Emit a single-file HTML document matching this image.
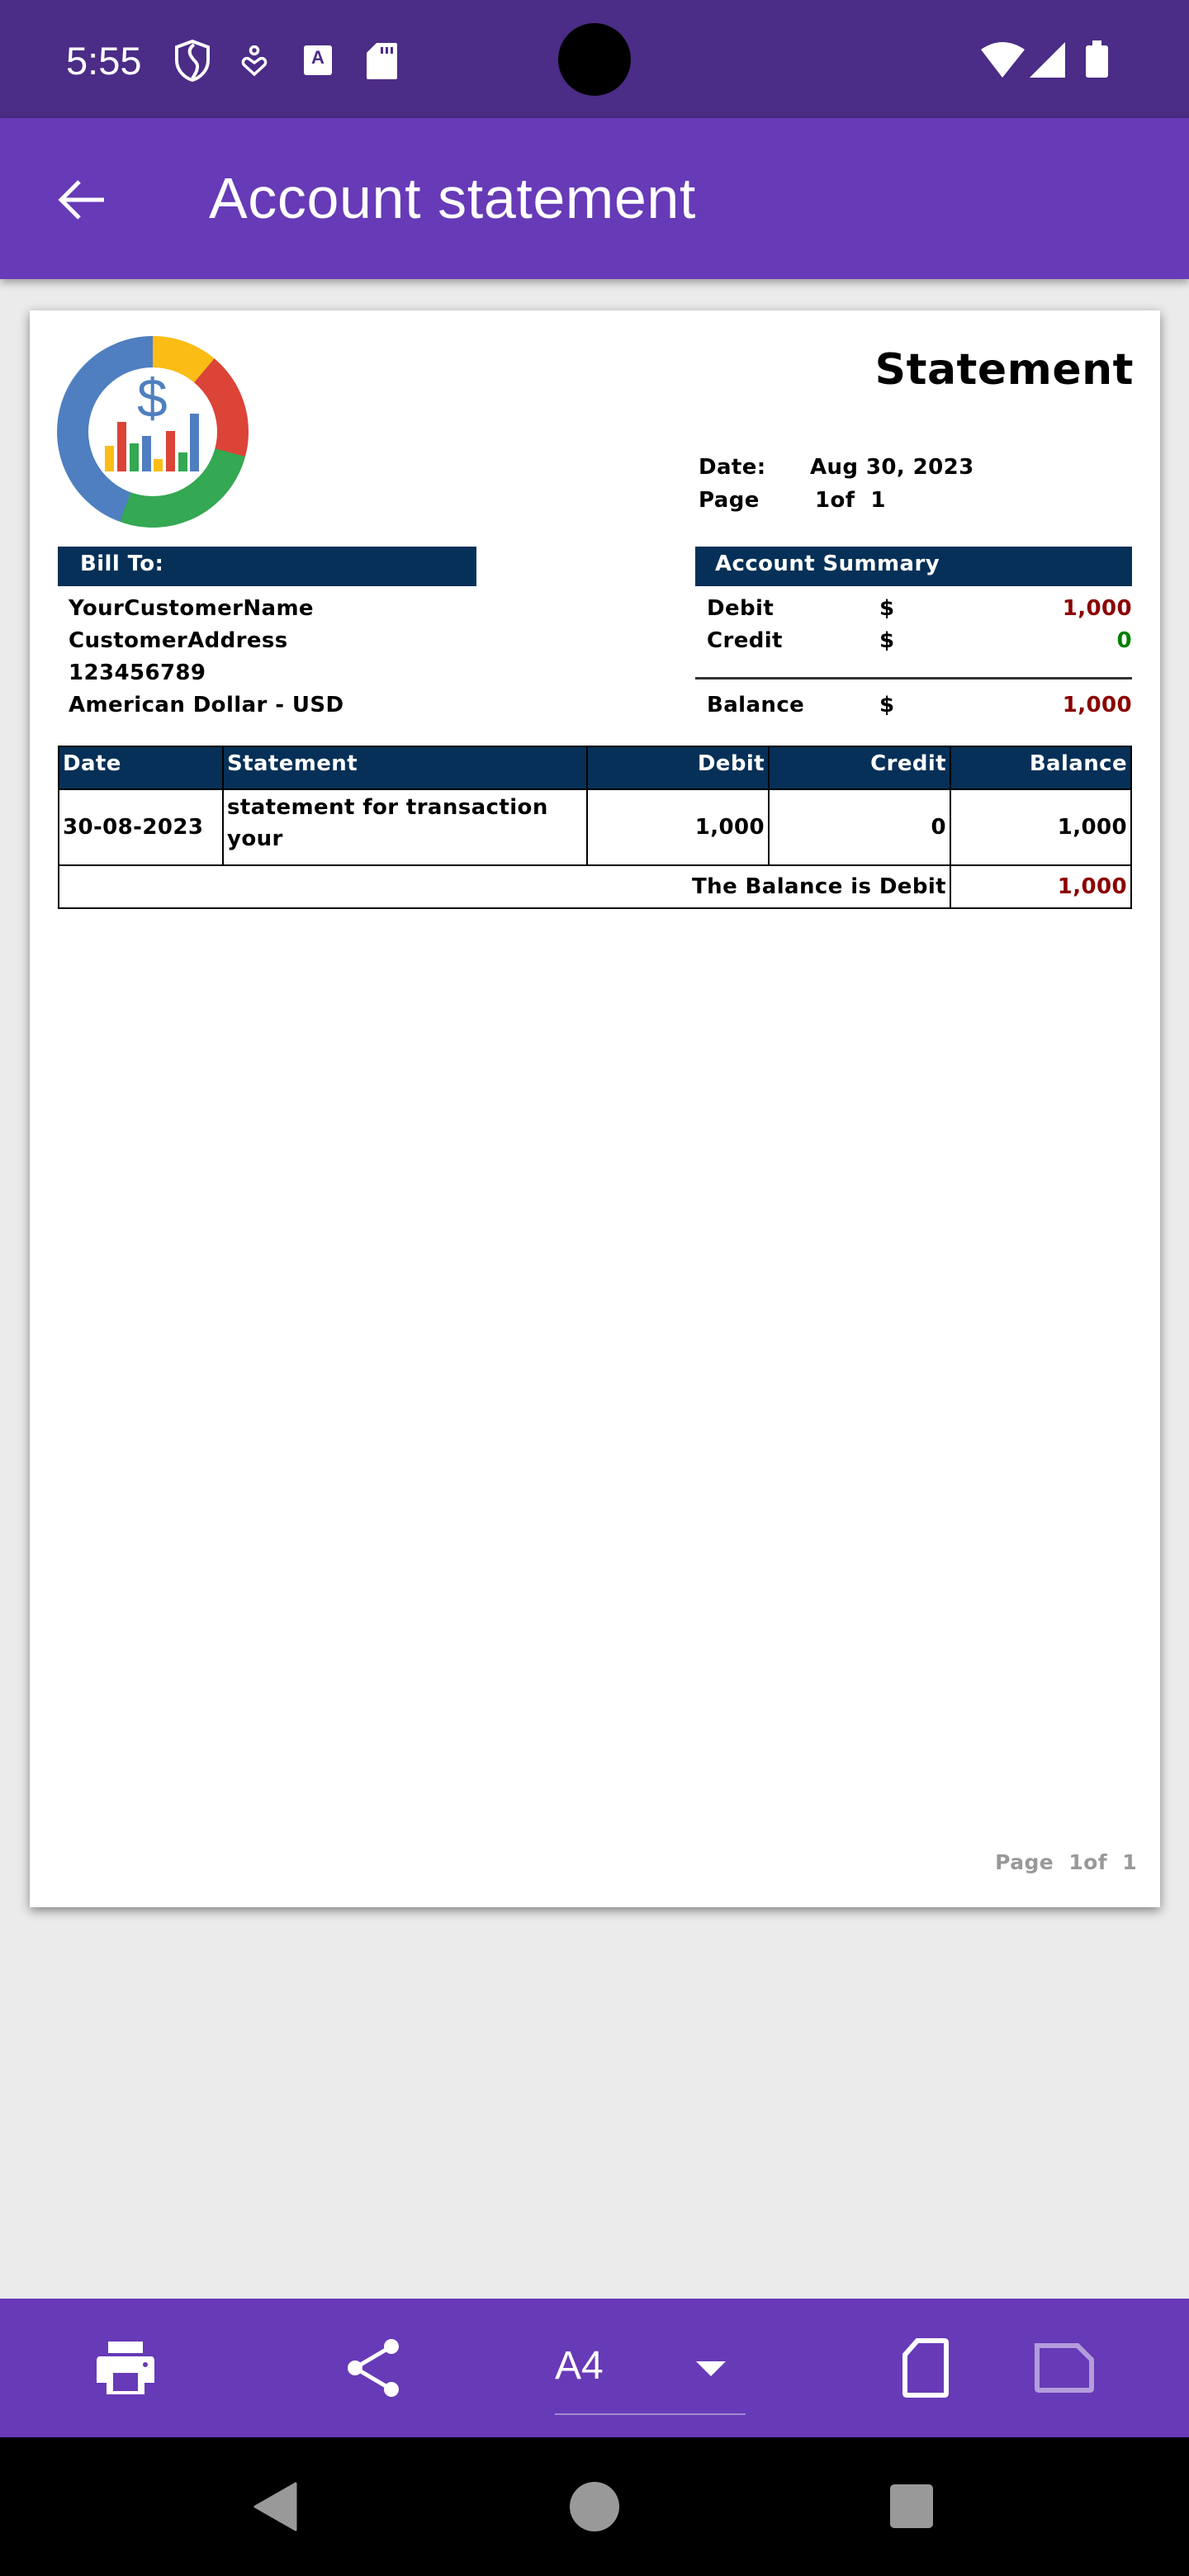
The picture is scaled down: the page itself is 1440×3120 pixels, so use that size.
<!DOCTYPE html>
<html><head><meta charset="utf-8"><style>
*{margin:0;padding:0;box-sizing:border-box}
body{width:1440px;height:3120px;background:#ebebeb;position:relative;overflow:hidden;font-family:"Liberation Sans",Arial,sans-serif}
.abs{position:absolute}
.doc{font-family:"DejaVu Sans","Liberation Sans",sans-serif;font-weight:bold;color:#000;font-size:26px;letter-spacing:0.4px;white-space:nowrap}
table{border-collapse:collapse;position:absolute;left:70px;top:903px;width:1301px;font-family:"DejaVu Sans","Liberation Sans",sans-serif}
td{border:2px solid #000;font-weight:bold;font-size:26px;letter-spacing:0.4px;padding:0 4px;white-space:nowrap}
th{background:#063057;color:#fff;border:2px solid #000;font-size:26px;letter-spacing:0.4px;text-align:left;padding:0 4px;height:52px;vertical-align:top;padding-top:5px}
</style></head><body>
<div class="abs" style="left:0;top:0;width:1440px;height:143px;background:#4b2c86"></div>
<div class="abs" style="left:80px;top:46px;color:#fff;font-size:47px;line-height:56px">5:55</div>
<svg class="abs" style="left:205px;top:45px" width="56" height="56" viewBox="0 0 56 56"><path d="M28 5 L47 12 V28 C47 40 38 49 28 52 C18 49 9 40 9 28 V12 Z" fill="none" stroke="#fff" stroke-width="4"/><path d="M30 9 C20 16 26 24 32 30 C37 36 32 44 28 50" fill="none" stroke="#fff" stroke-width="4"/></svg>
<svg class="abs" style="left:290px;top:55px" width="36" height="40" viewBox="0 0 36 40"><circle cx="18" cy="6" r="4.5" fill="none" stroke="#fff" stroke-width="3.5"/><path d="M18 35 L6 24 C2 20 6 14 11 16 L18 21 L25 16 C30 14 34 20 30 24 Z" fill="none" stroke="#fff" stroke-width="3.5"/></svg>
<div class="abs" style="left:368px;top:55px;width:34px;height:36px;background:#fff;border-radius:3px;color:#4b2c86;font-weight:bold;font-size:22px;text-align:center;line-height:30px">A</div>
<svg class="abs" style="left:444px;top:52px" width="37" height="44" viewBox="0 0 37 44"><path d="M12 0 H35 Q37 0 37 2 V42 Q37 44 35 44 H2 Q0 44 0 42 V12 Z" fill="#fff"/><rect x="17" y="5" width="3" height="8" fill="#4b2c86"/><rect x="23" y="5" width="3" height="8" fill="#4b2c86"/><rect x="29" y="5" width="3" height="8" fill="#4b2c86"/></svg>
<div class="abs" style="left:676px;top:28px;width:88px;height:88px;border-radius:50%;background:#000"></div>
<svg class="abs" style="left:1186px;top:48px" width="160" height="48" viewBox="0 0 160 48"><path d="M2 12 Q28 -6 55 12 L28 46 Z" fill="#fff"/><path d="M104 3 V46 H61 Z" fill="#fff"/><rect x="129" y="7" width="27" height="39" rx="3" fill="#fff"/><rect x="137" y="1" width="11" height="8" fill="#fff"/></svg>
<div class="abs" style="left:0;top:143px;width:1440px;height:195px;background:#673ab7;box-shadow:0 4px 10px rgba(0,0,0,.35)"></div>
<svg class="abs" style="left:68px;top:214px" width="60" height="56" viewBox="0 0 60 56"><path d="M58 28 H8 M28 6 L6 28 L28 50" fill="none" stroke="#fff" stroke-width="5"/></svg>
<div class="abs" style="left:253px;top:200px;color:#fff;font-size:70px;letter-spacing:0.6px;line-height:80px">Account statement</div>
<div class="abs" style="left:36px;top:376px;width:1369px;height:1934px;background:#fff;box-shadow:0 4px 12px rgba(0,0,0,.45)"></div>
<div class="abs" style="left:69px;top:407px;width:232px;height:232px;border-radius:50%;background:conic-gradient(#fbbc15 0deg 40deg,#db4437 40deg 105deg,#34a853 105deg 200deg,#4f7fc0 200deg 360deg)"></div>
<div class="abs" style="left:107px;top:445px;width:156px;height:156px;border-radius:50%;background:#fff"></div>
<div class="abs" style="left:166px;top:444px;color:#4f7fc0;font-size:66px;line-height:76px">$</div>
<div class="abs" style="left:127px;top:540px;width:11px;height:31px;background:#fbbc15"></div>
<div class="abs" style="left:142px;top:511px;width:11px;height:60px;background:#db4437"></div>
<div class="abs" style="left:157px;top:537px;width:11px;height:34px;background:#34a853"></div>
<div class="abs" style="left:172px;top:528px;width:11px;height:43px;background:#4f7fc0"></div>
<div class="abs" style="left:186px;top:556px;width:11px;height:15px;background:#fbbc15"></div>
<div class="abs" style="left:201px;top:522px;width:11px;height:49px;background:#db4437"></div>
<div class="abs" style="left:216px;top:548px;width:11px;height:23px;background:#34a853"></div>
<div class="abs" style="left:230px;top:501px;width:11px;height:70px;background:#4f7fc0"></div>
<div class="abs doc" style="right:67px;top:418px;font-size:52px;letter-spacing:0.5px">Statement</div>
<div class="abs doc" style="left:846px;top:551px">Date:</div>
<div class="abs doc" style="left:981px;top:551px">Aug 30, 2023</div>
<div class="abs doc" style="left:846px;top:591px">Page</div>
<div class="abs doc" style="left:987px;top:591px">1of&nbsp; 1</div>
<div class="abs" style="left:70px;top:662px;width:507px;height:48px;background:#063057"></div>
<div class="abs doc" style="left:97px;top:668px;color:#fff">Bill To:</div>
<div class="abs" style="left:842px;top:662px;width:529px;height:48px;background:#063057"></div>
<div class="abs doc" style="left:866px;top:668px;color:#fff">Account Summary</div>
<div class="abs doc" style="left:83px;top:722px">YourCustomerName</div>
<div class="abs doc" style="left:83px;top:761px">CustomerAddress</div>
<div class="abs doc" style="left:83px;top:800px">123456789</div>
<div class="abs doc" style="left:83px;top:839px">American Dollar - USD</div>
<div class="abs doc" style="left:856px;top:722px">Debit</div>
<div class="abs doc" style="left:1065px;top:722px">$</div>
<div class="abs doc" style="right:69px;top:722px;color:#8b0000">1,000</div>
<div class="abs doc" style="left:856px;top:761px">Credit</div>
<div class="abs doc" style="left:1065px;top:761px">$</div>
<div class="abs doc" style="right:69px;top:761px;color:#008000">0</div>
<div class="abs" style="left:842px;top:820px;width:529px;height:3px;background:#333"></div>
<div class="abs doc" style="left:856px;top:839px">Balance</div>
<div class="abs doc" style="left:1065px;top:839px">$</div>
<div class="abs doc" style="right:69px;top:839px;color:#8b0000">1,000</div>
<table>
<tr><th style="width:199px">Date</th><th style="width:441px">Statement</th><th style="width:220px;text-align:right">Debit</th><th style="width:220px;text-align:right">Credit</th><th style="text-align:right">Balance</th></tr>
<tr style="height:92px"><td>30-08-2023</td><td style="line-height:38px;vertical-align:top;padding-top:2px">statement for transaction<br>your</td><td style="text-align:right">1,000</td><td style="text-align:right">0</td><td style="text-align:right">1,000</td></tr>
<tr style="height:52px"><td colspan="4" style="text-align:right">The Balance is Debit</td><td style="text-align:right;color:#8b0000">1,000</td></tr>
</table>
<div class="abs doc" style="right:63px;top:2241px;color:#999;font-size:25px">Page&nbsp; 1of&nbsp; 1</div>
<div class="abs" style="left:0;top:2784px;width:1440px;height:168px;background:#673ab7"></div>
<svg class="abs" style="left:115px;top:2836px" width="74" height="64" viewBox="0 0 74 64"><rect x="16" y="0" width="42" height="14" fill="#fff"/><path d="M6 18 H68 Q72 18 72 24 V50 H60 V64 H14 V50 H2 V24 Q2 18 6 18Z" fill="#fff"/><rect x="22" y="38" width="30" height="22" fill="#673ab7"/><circle cx="61" cy="28" r="3" fill="#673ab7"/></svg>
<svg class="abs" style="left:418px;top:2832px" width="70" height="72" viewBox="0 0 70 72"><circle cx="56" cy="10" r="9" fill="#fff"/><circle cx="12" cy="36" r="9" fill="#fff"/><circle cx="56" cy="62" r="9" fill="#fff"/><path d="M56 10 L12 36 L56 62" fill="none" stroke="#fff" stroke-width="5"/></svg>
<div class="abs" style="left:672px;top:2838px;color:#fff;font-size:48px;line-height:56px">A4</div>
<svg class="abs" style="left:843px;top:2860px" width="36" height="20" viewBox="0 0 36 20"><path d="M0 0 H36 L18 18 Z" fill="#fff"/></svg>
<div class="abs" style="left:672px;top:2923px;width:231px;height:2px;background:#a18ad0"></div>
<svg class="abs" style="left:1093px;top:2832px" width="56" height="72" viewBox="0 0 56 72"><path d="M18 3 H51 Q53 3 53 5 V67 Q53 69 51 69 H5 Q3 69 3 67 V20 Z" fill="none" stroke="#fff" stroke-width="6"/></svg>
<svg class="abs" style="left:1253px;top:2838px" width="72" height="60" viewBox="0 0 72 60"><path d="M3 3 H52 L69 20 V55 Q69 57 67 57 H5 Q3 57 3 55 Z" fill="none" stroke="#b39ddb" stroke-width="6"/></svg>
<div class="abs" style="left:0;top:2952px;width:1440px;height:168px;background:#000"></div>
<svg class="abs" style="left:306px;top:3006px" width="56" height="60" viewBox="0 0 56 60"><path d="M52 2 V58 L3 30 Z" fill="#999" stroke="#999" stroke-width="3" stroke-linejoin="round"/></svg>
<div class="abs" style="left:690px;top:3006px;width:60px;height:60px;border-radius:50%;background:#999"></div>
<div class="abs" style="left:1078px;top:3009px;width:52px;height:53px;border-radius:5px;background:#999"></div>
</body></html>
